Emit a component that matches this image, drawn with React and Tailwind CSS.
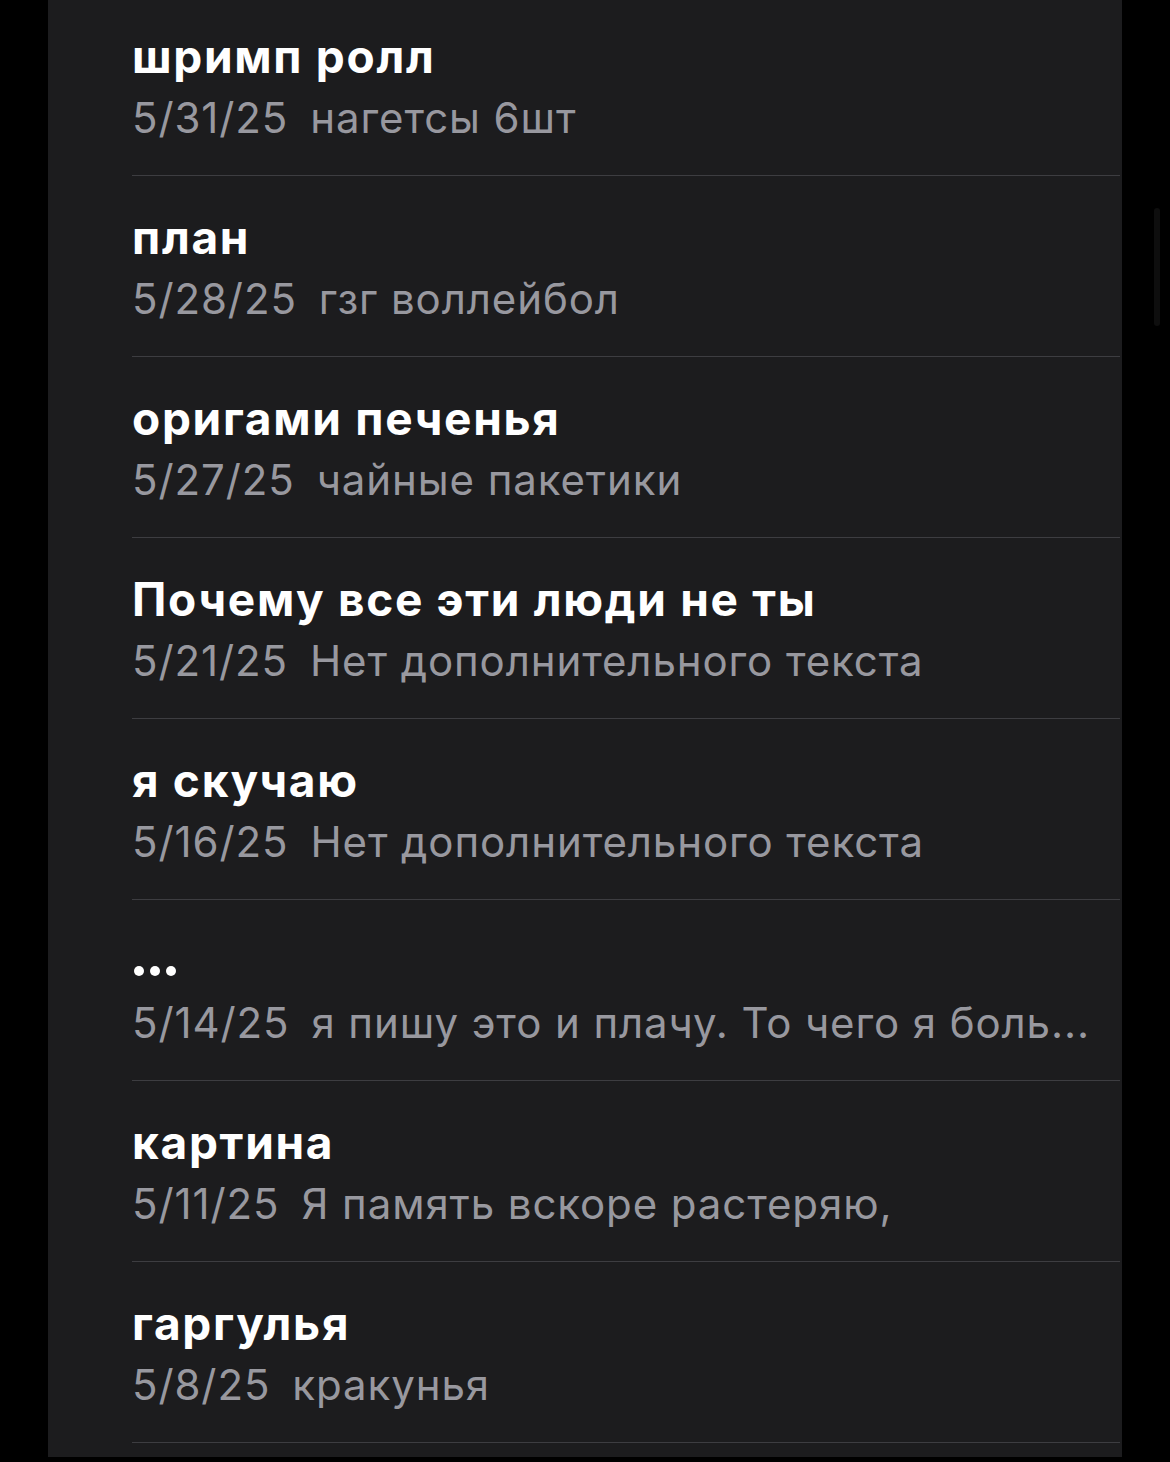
import React from "react";

const notes = [
  { title: "шримп ролл", date: "5/31/25", text: "нагетсы 6шт" },
  { title: "план", date: "5/28/25", text: "гзг воллейбол" },
  { title: "оригами печенья", date: "5/27/25", text: "чайные пакетики" },
  { title: "Почему все эти люди не ты", date: "5/21/25", text: "Нет дополнительного текста" },
  { title: "я скучаю", date: "5/16/25", text: "Нет дополнительного текста" },
  { title: "•••", date: "5/14/25", text: "я пишу это и плачу. То чего я боль...", dots: true },
  { title: "картина", date: "5/11/25", text: "Я память вскоре растеряю," },
  { title: "гаргулья", date: "5/8/25", text: "кракунья" },
];

export default function App() {
  return (
    <div className="relative w-[1170px] h-[1462px] overflow-hidden bg-black" style={{ fontFamily: "Inter, 'Noto Sans', sans-serif" }}>
      <div className="ml-[48px] w-[1074px] h-full bg-[#1c1c1e]">
        <div className="-mt-[5px]">
          {notes.map((n, i) => (
            <div key={i} className="pl-[84px]">
              <div className="h-[180px] pt-[35px]">
                {n.dots ? (
                  <div className="h-[52px] flex items-end pb-[11px] gap-[6px] pl-[2px]">
                    <span className="w-[10px] h-[10px] rounded-full bg-white" />
                    <span className="w-[10px] h-[10px] rounded-full bg-white" />
                    <span className="w-[10px] h-[10px] rounded-full bg-white" />
                  </div>
                ) : (
                  <div className="text-[46px] leading-[52px] font-bold text-white tracking-[1.7px] whitespace-nowrap">
                    {n.title}
                  </div>
                )}
                <div className="mt-[10px] flex text-[42px] leading-[52px] text-[#98989f] tracking-[0.9px] whitespace-nowrap">
                  <span>{n.date}</span>
                  <span className="ml-[22px]">{n.text}</span>
                </div>
              </div>
              <div className="mr-[2px] h-[1px] bg-[#3d3d41]" />
            </div>
          ))}
        </div>
      </div>
      <div className="absolute left-[1154px] top-[208px] w-[6px] h-[118px] rounded-full bg-[#0e0e0e]" />
    </div>
  );
}
